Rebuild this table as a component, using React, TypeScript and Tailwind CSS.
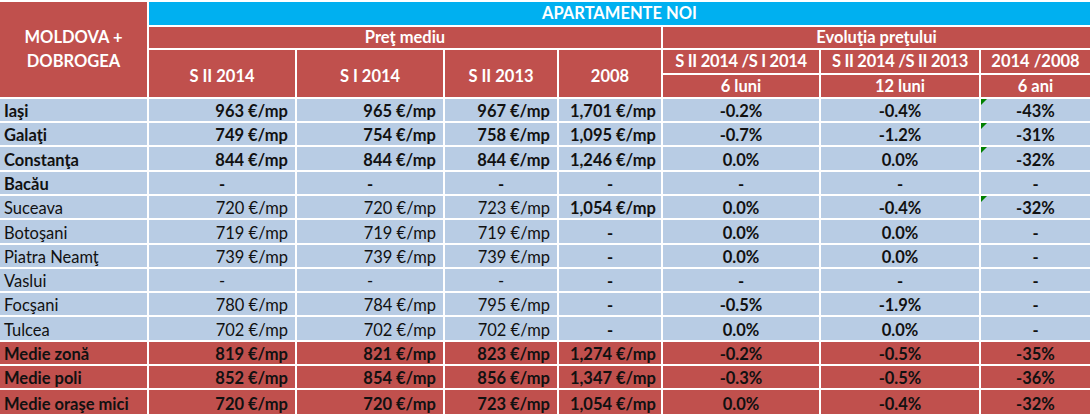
type Row = {
  name: string;
  prices: string[];
  y2008: string;
  pct: string[];
  bold?: boolean;
  flag?: boolean;
  total?: boolean;
};

const rows: Row[] = [
  { name: 'Iaşi', prices: ['963 €/mp', '965 €/mp', '967 €/mp'], y2008: '1,701 €/mp', pct: ['-0.2%', '-0.4%', '-43%'], bold: true, flag: true },
  { name: 'Galaţi', prices: ['749 €/mp', '754 €/mp', '758 €/mp'], y2008: '1,095 €/mp', pct: ['-0.7%', '-1.2%', '-31%'], bold: true, flag: true },
  { name: 'Constanţa', prices: ['844 €/mp', '844 €/mp', '844 €/mp'], y2008: '1,246 €/mp', pct: ['0.0%', '0.0%', '-32%'], bold: true, flag: true },
  { name: 'Bacău', prices: ['-', '-', '-'], y2008: '-', pct: ['-', '-', '-'], bold: true },
  { name: 'Suceava', prices: ['720 €/mp', '720 €/mp', '723 €/mp'], y2008: '1,054 €/mp', pct: ['0.0%', '-0.4%', '-32%'], flag: true },
  { name: 'Botoşani', prices: ['719 €/mp', '719 €/mp', '719 €/mp'], y2008: '-', pct: ['0.0%', '0.0%', '-'] },
  { name: 'Piatra Neamţ', prices: ['739 €/mp', '739 €/mp', '739 €/mp'], y2008: '-', pct: ['0.0%', '0.0%', '-'] },
  { name: 'Vaslui', prices: ['-', '-', '-'], y2008: '-', pct: ['-', '-', '-'] },
  { name: 'Focşani', prices: ['780 €/mp', '784 €/mp', '795 €/mp'], y2008: '-', pct: ['-0.5%', '-1.9%', '-'] },
  { name: 'Tulcea', prices: ['702 €/mp', '702 €/mp', '702 €/mp'], y2008: '-', pct: ['0.0%', '0.0%', '-'] },
  { name: 'Medie zonă', prices: ['819 €/mp', '821 €/mp', '823 €/mp'], y2008: '1,274 €/mp', pct: ['-0.2%', '-0.5%', '-35%'], total: true },
  { name: 'Medie poli', prices: ['852 €/mp', '854 €/mp', '856 €/mp'], y2008: '1,347 €/mp', pct: ['-0.3%', '-0.5%', '-36%'], total: true },
  { name: 'Medie oraşe mici', prices: ['720 €/mp', '720 €/mp', '723 €/mp'], y2008: '1,054 €/mp', pct: ['0.0%', '-0.4%', '-32%'], total: true },
];

function Head({ children, className = '' }: { children: React.ReactNode; className?: string }) {
  return (
    <div className={`bg-[#c0504d] text-white font-bold flex items-center justify-center ${className}`}>
      {children}
    </div>
  );
}

function Flag() {
  return (
    <svg className="absolute left-0 top-0" width="6" height="6" viewBox="0 0 6 6">
      <polygon points="0,0 6,0 0,6" fill="#008000" />
    </svg>
  );
}

export default function App() {
  return (
    <div className="w-[1090px] h-[416px] bg-white pt-[2px] overflow-hidden font-[Lato,sans-serif] text-[16.5px] text-[#111]">
      <div className="grid grid-cols-[147px_146px_146px_112px_102px_156px_158px_109px] grid-rows-[23px_21px_23px_22px_22px_22px_23px_22px_22px_23px_22px_22px_22px_23px_22px_22px_24px] gap-[2px]">
        {/* header */}
        <Head className="row-span-4 flex-col leading-[24px] pb-[2px]">
          <span>MOLDOVA +</span>
          <span>DOBROGEA</span>
        </Head>
        <div className="col-span-7 bg-[#00b0f0] text-white font-bold flex items-center justify-center">
          APARTAMENTE NOI
        </div>
        <Head className="col-span-4">Preţ mediu</Head>
        <Head className="col-span-3">Evoluţia preţului</Head>
        <Head className="row-span-2 pt-[6px]">S II 2014</Head>
        <Head className="row-span-2 pt-[6px]">S I 2014</Head>
        <Head className="row-span-2 pt-[6px]">S II 2013</Head>
        <Head className="row-span-2 pt-[6px]">2008</Head>
        <Head className="whitespace-nowrap tracking-[-0.3px]">S II 2014 /S I 2014</Head>
        <Head className="whitespace-nowrap tracking-[-0.3px]">S II 2014 /S II 2013</Head>
        <Head className="whitespace-nowrap">2014 /2008</Head>
        <Head>6 luni</Head>
        <Head>12 luni</Head>
        <Head>6 ani</Head>

        {/* data */}
        {rows.map((r) => {
          const bg = r.total ? 'bg-[#c0504d]' : 'bg-[#b8cce4]';
          const strong = r.bold || r.total;
          return (
            <div key={r.name} className="contents">
              <div className={`${bg} flex items-end pl-[4px] leading-[19px] whitespace-nowrap ${strong ? 'font-bold' : ''}`}>
                {r.name}
              </div>
              {r.prices.map((p, i) => (
                <div
                  key={i}
                  className={`${bg} flex items-end leading-[19px] whitespace-nowrap ${p === '-' ? 'justify-center' : 'justify-end pr-[7px]'} ${strong ? 'font-bold' : ''}`}
                >
                  {p}
                </div>
              ))}
              <div className={`${bg} flex items-end leading-[19px] whitespace-nowrap font-bold ${r.y2008 === '-' ? 'justify-center' : 'justify-end pr-[5px]'}`}>
                {r.y2008}
              </div>
              {r.pct.map((p, i) => (
                <div key={i} className={`${bg} relative flex items-end justify-center leading-[19px] font-bold`}>
                  {i === 2 && r.flag && <Flag />}
                  {p}
                </div>
              ))}
            </div>
          );
        })}
      </div>
    </div>
  );
}
